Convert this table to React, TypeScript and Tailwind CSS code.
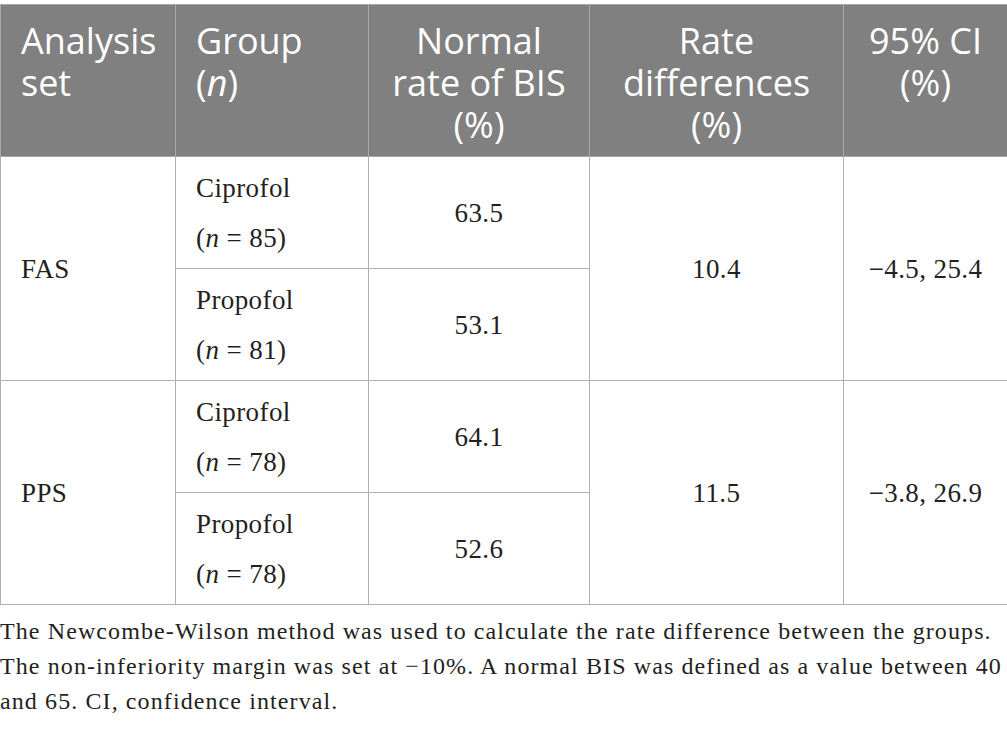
import React from 'react';

const sans = { fontFamily: '"Open Sans", "Noto Sans", sans-serif' };
const serif = { fontFamily: '"Liberation Serif", "DejaVu Serif", serif' };

type Sub = { group: string; n: string; rate: string };
type Block = { set: string; subs: Sub[]; diff: string; ci: string };

const data: Block[] = [
  {
    set: 'FAS',
    subs: [
      { group: 'Ciprofol', n: '85', rate: '63.5' },
      { group: 'Propofol', n: '81', rate: '53.1' },
    ],
    diff: '10.4',
    ci: '\u22124.5, 25.4',
  },
  {
    set: 'PPS',
    subs: [
      { group: 'Ciprofol', n: '78', rate: '64.1' },
      { group: 'Propofol', n: '78', rate: '52.6' },
    ],
    diff: '11.5',
    ci: '\u22123.8, 26.9',
  },
];

const th = 'border border-[#a9a9a9] bg-[#808080] text-white font-normal align-top pt-[15px] px-5 text-[36px] leading-[42px]';
const td = 'border border-[#b0b0b0] text-[#231f20] text-[27px] leading-[50px] tracking-[0.4px] align-middle';

const App = () => {
  return (
    <div className="w-[1007px] bg-white pt-[4px]">
      <table className="w-[1007px] border-collapse table-fixed">
        <colgroup>
          <col className="w-[175px]" />
          <col className="w-[193px]" />
          <col className="w-[221px]" />
          <col className="w-[254px]" />
          <col className="w-[164px]" />
        </colgroup>
        <thead>
          <tr className="h-[152px]" style={sans}>
            <th className={`${th} text-left`}>Analysis set</th>
            <th className={`${th} text-left`}>
              <span>Group</span>
              <br />
              <span>
                (<i>n</i>)
              </span>
            </th>
            <th className={`${th} text-center px-2`}>Normal rate of BIS (%)</th>
            <th className={`${th} text-center px-2`}>Rate differences (%)</th>
            <th className={`${th} text-center px-2`}>95% CI (%)</th>
          </tr>
        </thead>
        <tbody style={serif}>
          {data.map((b) =>
            b.subs.map((s, i) => (
              <tr key={b.set + i} className="h-[112px]">
                {i === 0 && (
                  <td rowSpan={2} className={`${td} px-5 text-left`}>
                    {b.set}
                  </td>
                )}
                <td className={`${td} px-5 text-left`}>
                  {s.group}
                  <br />(<i>n</i> = {s.n})
                </td>
                <td className={`${td} text-center`}>{s.rate}</td>
                {i === 0 && (
                  <>
                    <td rowSpan={2} className={`${td} text-center`}>
                      {b.diff}
                    </td>
                    <td rowSpan={2} className={`${td} text-center`}>
                      {b.ci}
                    </td>
                  </>
                )}
              </tr>
            ))
          )}
        </tbody>
      </table>
      <div className="mt-[9px] text-[24px] leading-[35px] tracking-[1.1px] text-[#231f20] whitespace-nowrap" style={serif}>
        <div>The Newcombe-Wilson method was used to calculate the rate difference between the groups.</div>
        <div>The non-inferiority margin was set at {'\u2212'}10%. A normal BIS was defined as a value between 40</div>
        <div>and 65. CI, confidence interval.</div>
      </div>
    </div>
  );
};

export default App;
